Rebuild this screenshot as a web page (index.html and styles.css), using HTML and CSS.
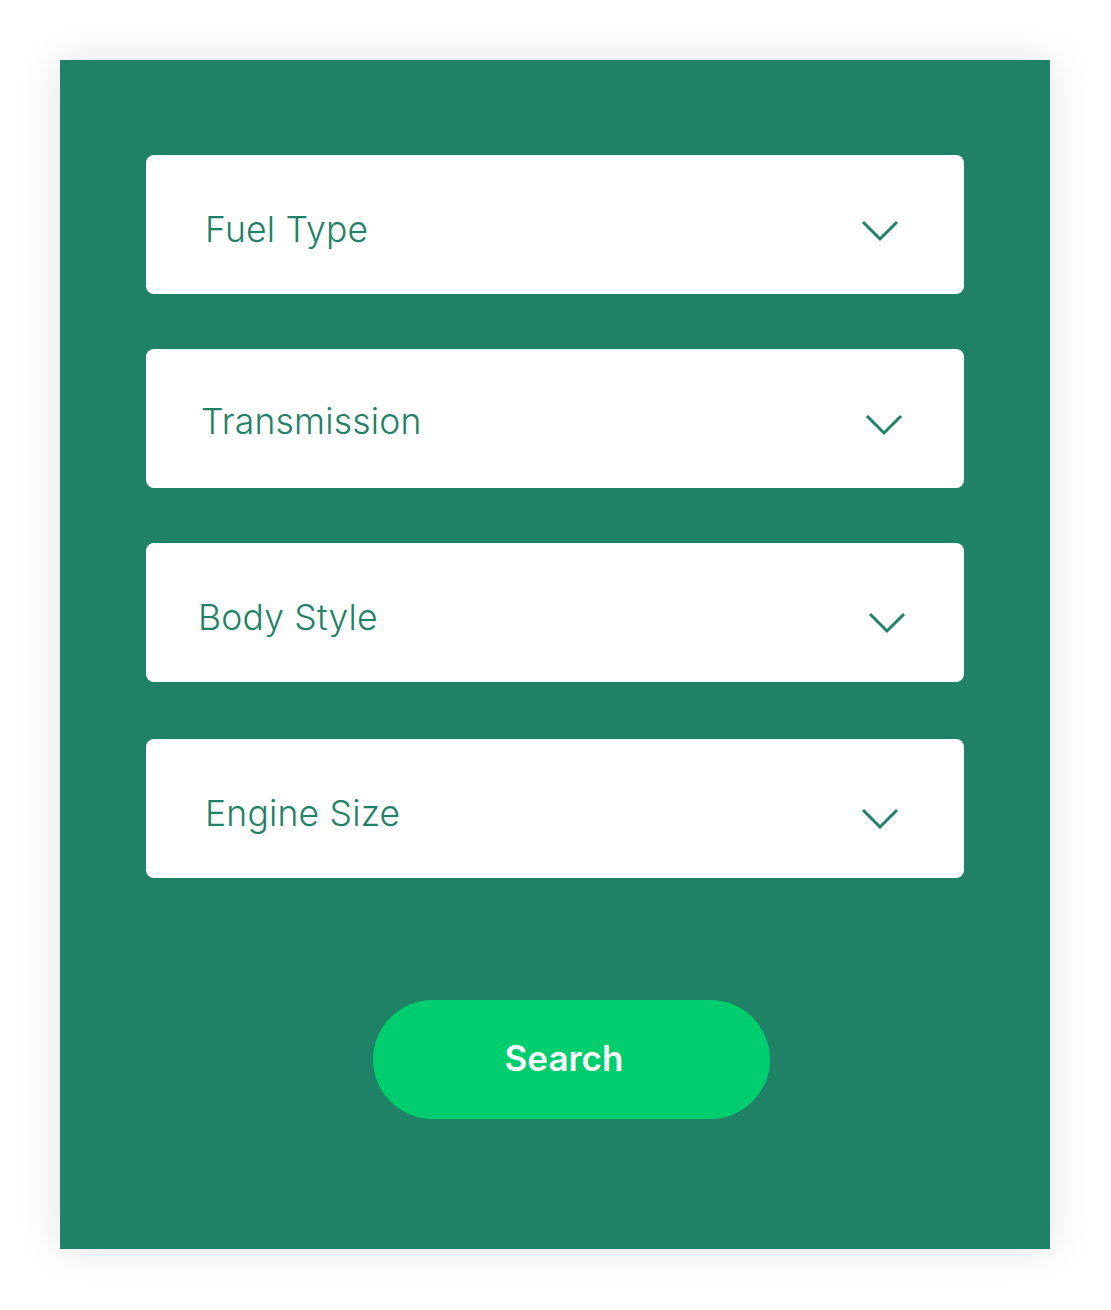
FILE: index.html
```html
<!DOCTYPE html>
<html lang="en">
<head>
  <meta charset="UTF-8">
  <title>Car Search</title>
  <meta name="viewport" content="width=device-width, initial-scale=1.0">
  <link rel="stylesheet" href="styles.css">
</head>
<body>
<div class="panel">
  <form class="search-form" onsubmit="return false">
    <div class="field field-fuel">
      <span class="field-label">Fuel Type</span>
      <svg class="chevron" viewBox="0 0 38 22"><path d="M2 2 L19 19 L36 2"/></svg>
    </div>
    <div class="field field-trans">
      <span class="field-label">Transmission</span>
      <svg class="chevron" viewBox="0 0 38 22"><path d="M2 2 L19 19 L36 2"/></svg>
    </div>
    <div class="field field-body">
      <span class="field-label">Body Style</span>
      <svg class="chevron" viewBox="0 0 38 22"><path d="M2 2 L19 19 L36 2"/></svg>
    </div>
    <div class="field field-engine">
      <span class="field-label">Engine Size</span>
      <svg class="chevron" viewBox="0 0 38 22"><path d="M2 2 L19 19 L36 2"/></svg>
    </div>
    <button type="submit" class="btn-search">Search</button>
  </form>
</div>
</body>
</html>
```

FILE: styles.css
```css
* { box-sizing: border-box; }
body {
  margin: 0;
  padding: 60px;
  background: #fff;
  font-family: Inter, 'Noto Sans', sans-serif;
}
.panel {
  width: 990px;
  height: 1189px;
  background: #1f8166;
  box-shadow: 0 0 40px rgba(0,0,0,0.12);
  padding: 95px 86px 0;
}
.search-form {
  display: flex;
  flex-direction: column;
  gap: 55px;
}
.field {
  display: flex;
  justify-content: space-between;
  align-items: center;
  height: 139px;
  background: #fff;
  border-radius: 8px;
  padding: 0 65px 0 59px;
  color: #1f8166;
}
.field-label {
  font-size: 35.5px;
  font-weight: 350;
  letter-spacing: 0.2px;
  margin-top: 10px;
}
.chevron {
  width: 38px;
  height: 22px;
  margin-top: 12px;
  fill: none;
  stroke: #1f8166;
  stroke-width: 3;
}
.field-trans { padding: 0 61px 0 55px; }
.field-trans .field-label { margin-top: 6px; }
.field-trans .chevron { margin-top: 12px; }
.field-body { padding: 0 58px 0 52px; }
.field-body .field-label { margin-top: 10px; }
.field-body .chevron { margin-top: 20px; }
.field-engine { margin-top: 2px; }
.field-engine .field-label { margin-top: 10px; }
.field-engine .chevron { margin-top: 20px; }
.btn-search {
  align-self: center;
  width: 397px;
  height: 119px;
  margin: 67px 0 0 32px;
  padding: 0 14px 4px 0;
  border: none;
  border-radius: 60px;
  background: #00cd6e;
  color: #fff;
  font-family: inherit;
  font-size: 35px;
  font-weight: 600;
  cursor: pointer;
}
```
